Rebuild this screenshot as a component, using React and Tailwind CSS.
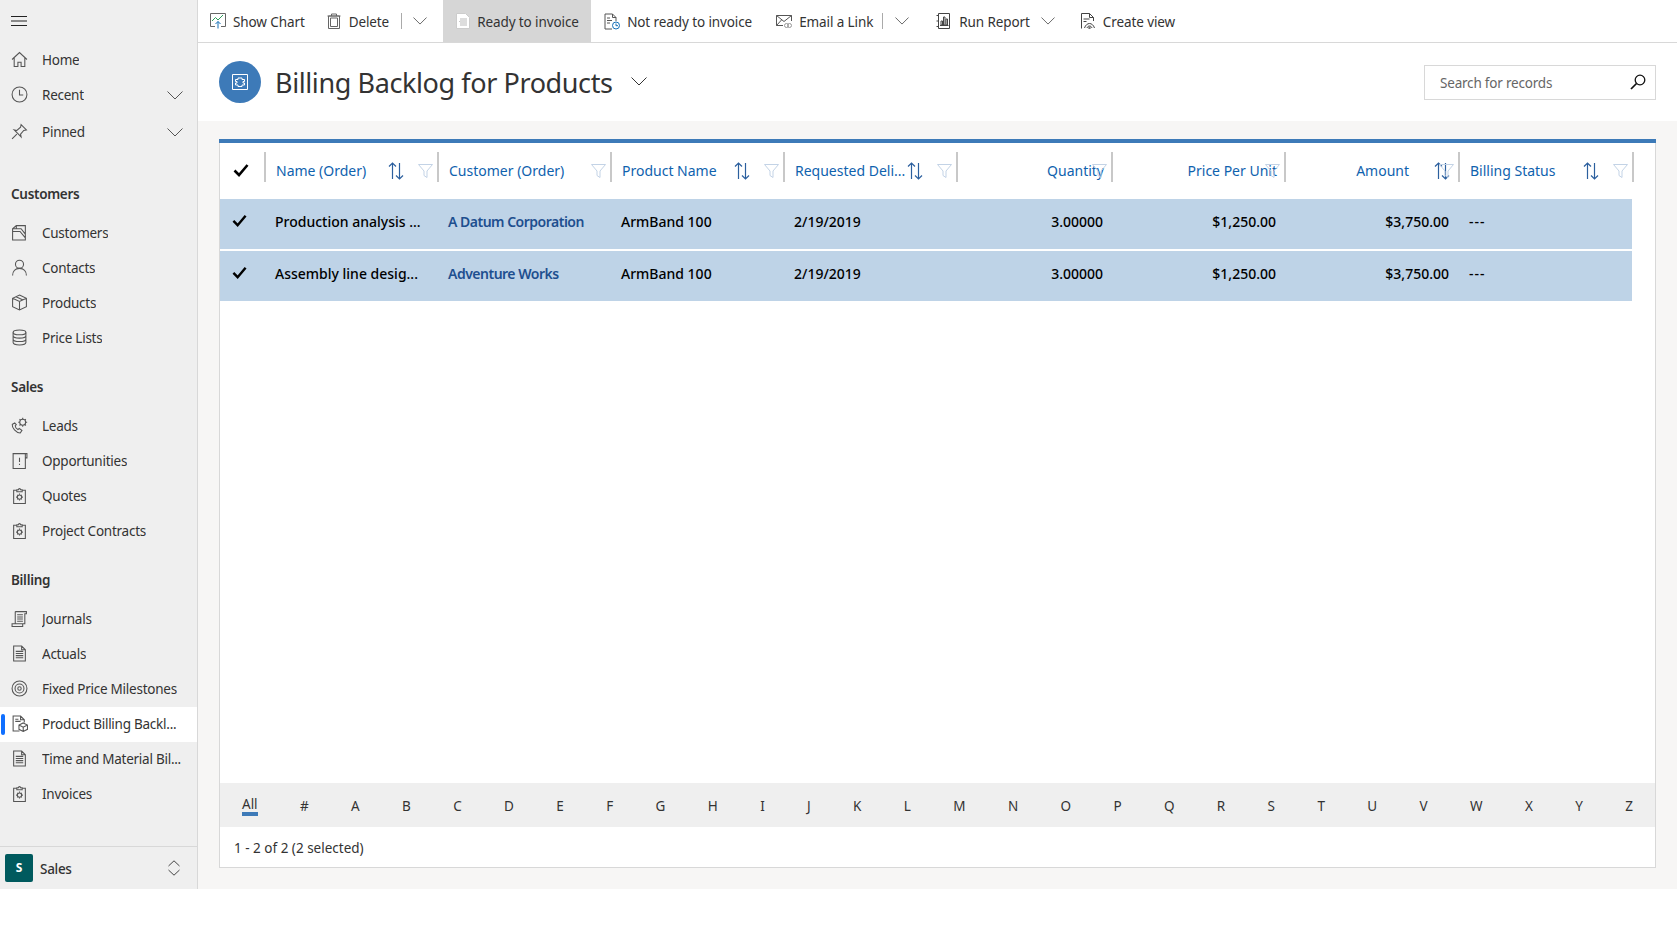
import React from "react";

const S = ({ size = 16, className = "", children, sw = 1 }) => (
  <svg width={size} height={size} viewBox="0 0 16 16" fill="none" stroke="currentColor" strokeWidth={sw} className={"shrink-0 " + className}>{children}</svg>
);

const Chevron = ({ w = 16, className = "text-[#555]" }) => (
  <svg width={w} height={w / 2 + 1} viewBox="0 0 16 9" fill="none" stroke="currentColor" strokeWidth="1" className={"shrink-0 " + className}><path d="M.5.5 8 8l7.5-7.5" /></svg>
);

const I = {
  home: <S size={17}><path d="M1 8 8 1.5 15 8M3 6.5V14.5h3.5v-4h3v4H13V6.5" /></S>,
  clock: <S size={17}><circle cx="8" cy="8" r="7" /><path d="M8 3.5V8.5h3.5" /></S>,
  pin: <S size={17}><path d="M9.5 1.5 14.5 6.5 12 7 9 10.5 9.5 13 3 6.5 5.5 7 9 4ZM5.5 10.5 1 15" /></S>,
  customers: <S size={17}><path d="M1.5 15V4.5L5 1.5h8.5V15ZM1.5 4.5h8l4 5M5 1.5v3M1.5 15V7h7l5 6" /></S>,
  contact: <S size={17}><circle cx="8" cy="5" r="3.8" /><path d="M1.5 15.5c0-4 2.5-6.7 6.5-6.7s6.5 2.7 6.5 6.7" /></S>,
  product: <S size={17}><path d="M8 1 14.5 4V12L8 15 1.5 12V4ZM1.5 4 8 7l6.5-3M8 7v8M4.8 2.6l6.5 3" /></S>,
  db: <S size={17}><ellipse cx="8" cy="3.2" rx="6" ry="2.2" /><path d="M2 3.2v9.6c0 1.2 2.7 2.2 6 2.2s6-1 6-2.2V3.2M2 6.4c0 1.2 2.7 2.2 6 2.2s6-1 6-2.2M2 9.6c0 1.2 2.7 2.2 6 2.2s6-1 6-2.2" /></S>,
  leads: <S size={17}><path d="M3.5 5.5 1.2 7c-.5 3 3.5 8 7.5 8l1.6-2.4-2.6-1.8-1.2 1C5 11 4 9.5 4 8.2l1-.9Z" /><circle cx="11" cy="5" r="2.8" /><path d="M11 .8v1.4M11 7.8v1.4M6.8 5h1.4M13.8 5h1.4M8 2l1 1M13 7l1 1M8 8l1-1M13 3l1-1" /></S>,
  opp: <S size={17}><path d="M2 1.5h11.5v14H2ZM8 5.5V9.5M8 11v1.2M13.5 1.5h1.5v4h-1.5" /></S>,
  quote: <S size={17}><path d="M5.5 3H2.5v12.5h11V3h-3M5.5 4.5V2.5H7a1 1 0 0 1 2 0h1.5v2Z" /><circle cx="8" cy="9.5" r="2" /><path d="M8 6.2v1.2M8 11.6v1.2M4.8 9.5H6M10 9.5h1.2M5.8 7.3l.8.8M9.4 10.9l.8.8M5.8 11.7l.8-.8M9.4 8.1l.8-.8" /></S>,
  journal: <S size={17}><path d="M4 1.5h10.5v2H13V13H11v2.5H1V13h10M4 1.5V13M5.8 4.5h5.4M5.8 6.5h5.4M5.8 8.5h5.4M5.8 10.5h5.4" /></S>,
  doc: <S size={17}><path d="M2.5 1h7.5l3.5 3.5V15h-11ZM10 1v3.5h3.5M4.5 6h7M4.5 8h7M4.5 10h7M4.5 12h7" /></S>,
  target: <S size={17}><circle cx="8" cy="8" r="7" /><circle cx="8" cy="8" r="4.2" /><circle cx="8" cy="8" r="1.6" /></S>,
  billing: <S size={17}><path d="M8 15H2V1h7l3.5 3.5V7M9 1v3.5h3.5M4 4h3M4 6h5" /><path d="M11.5 7.5 15.5 9.5V13.5L11.5 15.5 7.5 13.5V9.5ZM7.5 9.5l4 2 4-2M11.5 11.5v4" /></S>,
  chart: (
    <svg width="16" height="16" viewBox="0 0 16 16" fill="none" className="shrink-0">
      <path d="M5 13.5H.5V.5h15v13H11" stroke="#666" />
      <path d="M2 8 5.5 4.5 8 7l5-5" stroke="#2e9e5b" />
      <path d="M8 15.5V8.5M5.5 11 8 8.5l2.500 2.500" stroke="#1570b8" />
    </svg>
  ),
  trash: <S size={16} className="text-[#666]"><path d="M2.500 3v12.500h11V3ZM1.500 3h13M5.500 3V1h5v2M4.500 5h7v8.500h-7Z" /></S>,
  ready: (
    <svg width="14" height="16" viewBox="0 0 14 16" fill="#fff" stroke="#ccc" className="shrink-0">
      <path d="M.5.5h9l4 4v11H.5Z" />
      <path d="M4 6h7M4 8h7M4 10h7M4 12h7M3 8.500h.8" stroke="#bbb" />
    </svg>
  ),
  notReady: (
    <svg width="16" height="17" viewBox="0 0 16 17" fill="none" className="shrink-0">
      <path d="M8 16H1V1h7.500L12 4.500V8M8.500 1v3.500H12M3 5h3M3 7.500h5M3 10h3" stroke="#555" />
      <circle cx="12" cy="12.500" r="3.500" stroke="#1570b8" />
      <path d="M12 10.500v2.200h2" stroke="#1570b8" />
    </svg>
  ),
  mail: (
    <svg width="16" height="15" viewBox="0 0 16 15" fill="none" stroke="#555" className="shrink-0">
      <path d="M7 11.500H.5V1.500h15V7M.5 1.500 8 7.500l7.500-6M.5 11.500 5.500 6" />
      <circle cx="10.500" cy="11.500" r="2" stroke="#999" />
      <circle cx="13.500" cy="11.500" r="2" stroke="#999" />
    </svg>
  ),
  report: <S size={16} className="text-[#444]"><path d="M2.500.5h11v15h-11ZM.5 2.500h2M.5 8h2M.5 13.500h2M5 12V8h1.500v4ZM7.500 12V4h1.500v8ZM10 12V6h1.500v6ZM4 12.500h8.500" /></S>,
  view: <S size={16} className="text-[#444]"><path d="M1.500 15.500V.5h8l4 4V8M9.500.5v4h4M3.500 6h6M3.500 8.500h3" /><path d="M4.500 15c1-3 3-4.500 5-4.500s4 1.500 5 4.500M7 15c.5-1.500 1.500-2 2.500-2s2 .5 2.500 2" /><circle cx="9.500" cy="15" r=".8" /></S>,
  search: (
    <svg width="16" height="16" viewBox="0 0 16 16" fill="none" stroke="#111" strokeWidth="1.300" className="shrink-0">
      <circle cx="10" cy="6" r="4.800" />
      <path d="M6.500 9.500 1 15" strokeWidth="1.700" />
    </svg>
  ),
};

const Tick = ({ w = 16 }) => (
  <svg width={w} height={w} viewBox="0 0 16 16" fill="none" stroke="#000" strokeWidth="2.600" className="shrink-0"><path d="M1.500 8.500 6 13 14.500 3" /></svg>
);

const Sort = () => (
  <svg width="16" height="18" viewBox="0 0 16 18" fill="none" stroke="currentColor" strokeWidth="1.200" className="text-[#2b5f9e]"><path d="M4.500 17V1M1 4.500 4.500 1 8 4.500M11.500 1v16M8 13.500 11.500 17 15 13.500" /></svg>
);

const Funnel = () => (
  <svg width="15" height="14" viewBox="0 0 15 14" fill="none" stroke="#c3d3e6"><path d="M.5.500h14L9 7v6.500L6 11.500V7Z" /></svg>
);

const Row = ({ icon, label, active, right }) => (
  <div className={"relative flex h-[35px] items-center pl-[11px] pr-[14px] " + (active ? "bg-white" : "")}>
    {active && <span className="absolute left-[1px] top-[7px] h-[21px] w-[4px] rounded-sm bg-[#0f6fff]" />}
    <span className="mb-[2px] flex w-[31px] shrink-0 text-[#555]">{icon}</span>
    <span className="truncate text-[13.5px] tracking-[-0.25px] text-[#333]">{label}</span>
    {right && <span className="ml-auto">{right}</span>}
  </div>
);

const SectionHead = ({ children, className = "" }) => (
  <div className={"flex h-[35px] items-center pl-[11px] text-[13.5px] font-semibold tracking-[-0.3px] text-[#333] " + className}>{children}</div>
);

const ToolItem = ({ icon, label, className = "" }) => (
  <div className={"flex h-full items-center text-[13.5px] tracking-[-0.1px] text-[#333] " + className}>
    {icon}
    <span className="ml-[7px] pt-[2px]">{label}</span>
  </div>
);

const Sep = ({ className = "" }) => <span className={"h-[16px] w-px bg-[#aaa] " + className} />;

const Th = ({ label, w, sort, filter = true, right, textR, sortR = 33, pl = 10 }) => (
  <div className="relative flex h-[55px] shrink-0 items-center border-r-2 border-transparent" style={{ width: w }}>
    <span className={"text-[#0f62ae] text-[14px] whitespace-nowrap " + (right ? "absolute" : "")} style={right ? { right: textR } : { paddingLeft: pl }}>{label}</span>
    {sort && <span className="absolute top-[19px]" style={{ right: sortR }}><Sort /></span>}
    {filter && <span className="absolute right-[4px] top-[21px]"><Funnel /></span>}
    <span className="absolute right-[-2px] top-[9px] h-[30px] w-[2px] bg-[#c8c8c8]" />
  </div>
);

const DataRow = ({ name, customer }) => (
  <div className="flex h-[50px] w-[1412px] items-center bg-[#bed3e7] pb-[5px] text-[14px] font-medium text-black">
    <span className="flex w-[55px] shrink-0 pb-[2px] pl-[12px]"><Tick w={15} /></span>
    <span className="w-[173px] shrink-0">{name}</span>
    <span className="w-[173px] shrink-0 font-semibold tracking-[-0.5px] text-[#1e4f8f]">{customer}</span>
    <span className="w-[173px] shrink-0">ArmBand 100</span>
    <span className="w-[200px] shrink-0">2/19/2019</span>
    <span className="w-[109px] shrink-0 text-right">3.00000</span>
    <span className="w-[173px] shrink-0 text-right">$1,250.00</span>
    <span className="w-[173px] shrink-0 text-right">$3,750.00</span>
    <span className="ml-[20px] tracking-[1px]">---</span>
  </div>
);

const letters = "# A B C D E F G H I J K L M N O P Q R S T U V W X Y Z".split(" ");

export default function App() {
  return (
    <div className="h-[937px] overflow-hidden bg-white font-['Noto_Sans',sans-serif]">
      <div className="flex h-[889px]">
        <aside className="flex w-[198px] shrink-0 flex-col border-r border-[#d8d8d8] bg-[#efefef]">
          <div className="flex h-[42.500px] shrink-0 items-center pl-[11px]">
            <svg width="16" height="10" viewBox="0 0 16 10" stroke="#222"><path d="M0 .5h16M0 5h16M0 9.500h16" /></svg>
          </div>
          <Row icon={I.home} label="Home" />
          <Row icon={I.clock} label="Recent" right={<Chevron />} />
          <div className="pt-[2px]"><Row icon={I.pin} label="Pinned" right={<Chevron />} /></div>
          <SectionHead className="mt-[27px] mb-[4px]">Customers</SectionHead>
          <Row icon={I.customers} label="Customers" />
          <Row icon={I.contact} label="Contacts" />
          <Row icon={I.product} label="Products" />
          <Row icon={I.db} label="Price Lists" />
          <SectionHead className="mt-[14px] mb-[4px]">Sales</SectionHead>
          <Row icon={I.leads} label="Leads" />
          <Row icon={I.opp} label="Opportunities" />
          <Row icon={I.quote} label="Quotes" />
          <Row icon={I.quote} label="Project Contracts" />
          <SectionHead className="mt-[14px] mb-[4px]">Billing</SectionHead>
          <Row icon={I.journal} label="Journals" />
          <Row icon={I.doc} label="Actuals" />
          <Row icon={I.target} label="Fixed Price Milestones" />
          <Row icon={I.billing} label="Product Billing Backl..." active />
          <Row icon={I.doc} label="Time and Material Bil..." />
          <Row icon={I.quote} label="Invoices" />
          <div className="mt-auto flex h-[43px] items-center border-t border-[#d8d8d8] pl-[5px] pr-[16px]">
            <span className="flex h-[28px] w-[28px] items-center justify-center rounded-[2px] bg-[#005a5e] text-[12px] font-bold text-white">S</span>
            <span className="ml-[7px] mt-[2px] text-[13.5px] font-medium tracking-[-0.3px] text-[#333]">Sales</span>
            <svg width="14" height="16" viewBox="0 0 14 16" fill="none" stroke="#444" className="ml-auto"><path d="M1.500 6 7 .8 12.500 6M1.500 10 7 15.200 12.500 10" /></svg>
          </div>
        </aside>

        <main className="flex min-w-0 flex-1 flex-col bg-[#f7f6f5]">
          <div className="flex h-[43px] shrink-0 items-center border-b border-[#d8d8d8] bg-white pl-[12px]">
            <ToolItem icon={I.chart} label="Show Chart" />
            <ToolItem icon={I.trash} label="Delete" className="ml-[21px]" />
            <Sep className="ml-[12px]" />
            <span className="ml-[11px] mr-[16px]"><Chevron w={14} /></span>
            <ToolItem icon={I.ready} label="Ready to invoice" className="w-[148px] bg-[#d6d6d6] pl-[13px]" />
            <ToolItem icon={I.notReady} label="Not ready to invoice" className="ml-[13px]" />
            <ToolItem icon={I.mail} label="Email a Link" className="ml-[24px]" />
            <Sep className="ml-[9px]" />
            <span className="ml-[12px]"><Chevron w={14} /></span>
            <ToolItem icon={I.report} label="Run Report" className="ml-[27px]" />
            <span className="ml-[11px]"><Chevron w={14} /></span>
            <ToolItem icon={I.view} label="Create view" className="ml-[25px]" />
          </div>

          <div className="flex h-[78px] shrink-0 items-center bg-white pl-[21px] pr-[21px]">
            <span className="flex h-[42px] w-[42px] items-center justify-center rounded-full bg-[#3d7ab8]">
              <svg width="16" height="16" viewBox="0 0 16 16" fill="none" stroke="#fff"><path d="M.5.500h15v15H.5Z" /><path d="M6 4h4v1.500h2.500v2H11v1.500h1.500v2H10V12.500H6V11H3.500V9H5V7.500H3.500v-2H6Z" /></svg>
            </span>
            <span className="ml-[14px] mt-[2px] text-[27px] tracking-[-0.4px] text-[#333]">Billing Backlog for Products</span>
            <span className="ml-[18px] mb-[2px]"><Chevron w={16} className="text-[#333]" /></span>
            <div className="ml-auto flex h-[35px] w-[232px] items-center justify-between border border-[#d8d8d8] pl-[15px] pr-[9px]">
              <span className="pt-[2px] text-[13.5px] tracking-[-0.2px] text-[#666]">Search for records</span>
              {I.search}
            </div>
          </div>

          <div className="ml-[21px] mr-[21px] mt-[18px] flex h-[729px] flex-col border border-t-0 border-[#d8d8d8] bg-white">
            <div className="h-[4px] shrink-0 -ml-px -mr-px bg-[#3d7ab8]" />
            <div className="flex shrink-0">
              <div className="relative flex h-[55px] w-[46px] shrink-0 items-center pb-[2px] pl-[13px]">
                <Tick w={16} />
                <span className="absolute right-0 top-[9px] h-[30px] w-[2px] bg-[#c8c8c8]" />
              </div>
              <Th label="Name (Order)" w={173} sort />
              <Th label="Customer (Order)" w={173} />
              <Th label="Product Name" w={173} sort />
              <Th label="Requested Deli..." w={173} sort />
              <Th label="Quantity" w={155} right textR={7} />
              <Th label="Price Per Unit" w={173} right textR={7} />
              <Th label="Amount" w={174} right textR={49} sort sortR={8} />
              <Th label="Billing Status" w={174} sort />
            </div>
            <div className="mt-px flex flex-col gap-[2px]">
              <DataRow name="Production analysis ..." customer="A Datum Corporation" />
              <DataRow name="Assembly line desig..." customer="Adventure Works" />
            </div>
            <div className="mt-auto flex h-[44px] shrink-0 items-center justify-between bg-[#efefef] pl-[22px] pr-[22px] pt-[2px] text-[13.5px] text-[#333]">
              <span className="relative mb-[1px] pb-[3px] leading-[18px]">
                All
                <span className="absolute bottom-0 left-0 right-0 h-[4px] bg-[#3d7ab8]" />
              </span>
              {letters.map((l) => <span key={l}>{l}</span>)}
            </div>
            <div className="flex h-[40px] shrink-0 items-center pl-[14px] pt-[2px] text-[13.5px] text-[#333]">1 - 2 of 2 (2 selected)</div>
          </div>
        </main>
      </div>
    </div>
  );
}
